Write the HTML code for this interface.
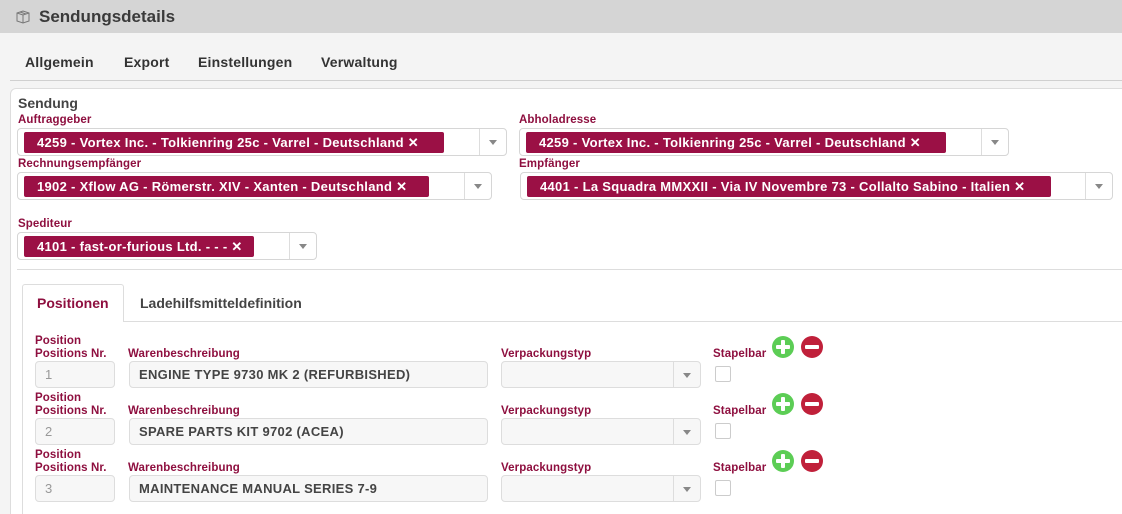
<!DOCTYPE html>
<html style="width:1122px;height:514px;overflow:hidden"><head><meta charset="utf-8"><style>
*{box-sizing:border-box;margin:0;padding:0}
body{width:1122px;height:514px;overflow:hidden;background:#f4f4f4;font-family:"Liberation Sans",sans-serif;position:relative;color:#333}
.a{position:absolute;white-space:nowrap}
.hdr{left:0;top:0;width:1122px;height:33px;background:#d5d5d5}
.ttl{left:39px;top:7px;font-size:17px;font-weight:bold;color:#3a3a3a}
.menu{top:54px;font-size:14px;font-weight:bold;color:#333;letter-spacing:.2px}
.card{left:10px;top:88px;width:1130px;height:440px;background:#fff;border:1px solid #ddd;border-radius:6px}
.lbl{font-size:11.5px;font-weight:bold;color:#8e0f3f;letter-spacing:.1px}
.box{height:28px;border:1px solid #d6d6d6;border-radius:4px;background:#fff}
.dd{position:absolute;top:0;right:0;width:27px;height:26px;border-left:1px solid #ddd}
.dd:after{content:"";position:absolute;left:9px;top:11px;border:4px solid transparent;border-top:5px solid #888}
.tag{position:absolute;left:6px;top:3px;height:21px;background:#9b1045;border-radius:2px;color:#fff;font-size:13px;font-weight:bold;line-height:21px;padding-left:13px;white-space:nowrap;overflow:hidden;letter-spacing:.3px}
.inp{height:27px;border:1px solid #ddd;border-radius:4px;background:#f7f7f7;font-size:13px;font-weight:bold;color:#444;line-height:25px;padding-left:9px;letter-spacing:.3px}
.chk{width:16px;height:16px;border:1px solid #ccc;border-radius:2px;background:#fff}
.plus,.minus{width:22px;height:22px;border-radius:50%}
.plus{background:#5ccd55}.minus{background:#c0203a}
.plus:before,.plus:after,.minus:before{content:"";position:absolute;background:#fff;border-radius:1px}
.plus:before,.minus:before{left:4px;top:9px;width:14px;height:4px}
.plus:after{left:9px;top:4px;width:4px;height:14px}
</style></head><body>
<div class="a hdr"></div>
<svg class="a" style="left:15px;top:9px" width="16" height="16" viewBox="0 0 16 16" fill="none" stroke="#777" stroke-width="1"><path d="M2 4l6-2 6 2v8l-6 2-6-2z M2 4l6 2 6-2 M8 6v8 M5 3l6 2"/></svg>
<div class="a ttl">Sendungsdetails</div>
<div class="a menu" style="left:25px">Allgemein</div>
<div class="a menu" style="left:124px">Export</div>
<div class="a menu" style="left:198px">Einstellungen</div>
<div class="a menu" style="left:321px">Verwaltung</div>
<div class="a" style="left:10px;top:80px;width:1112px;height:1px;background:#d0d0d0"></div>
<div class="a card"></div>
<div class="a" style="left:18px;top:95px;font-size:14px;font-weight:bold;color:#444">Sendung</div>

<div class="a lbl" style="left:18px;top:114px">Auftraggeber</div>
<div class="a box" style="left:17px;top:128px;width:490px"><div class="tag" style="width:420px">4259 - Vortex Inc. - Tolkienring 25c - Varrel - Deutschland ✕</div><div class="dd"></div></div>
<div class="a lbl" style="left:519px;top:114px">Abholadresse</div>
<div class="a box" style="left:519px;top:128px;width:490px"><div class="tag" style="width:420px">4259 - Vortex Inc. - Tolkienring 25c - Varrel - Deutschland ✕</div><div class="dd"></div></div>
<div class="a lbl" style="left:18px;top:158px">Rechnungsempfänger</div>
<div class="a box" style="left:17px;top:172px;width:475px"><div class="tag" style="width:405px">1902 - Xflow AG - Römerstr. XIV - Xanten - Deutschland ✕</div><div class="dd"></div></div>
<div class="a lbl" style="left:519px;top:158px">Empfänger</div>
<div class="a box" style="left:520px;top:172px;width:593px"><div class="tag" style="width:524px">4401 - La Squadra MMXXII - Via IV Novembre 73 - Collalto Sabino - Italien ✕</div><div class="dd"></div></div>
<div class="a lbl" style="left:18px;top:218px">Spediteur</div>
<div class="a box" style="left:17px;top:232px;width:300px"><div class="tag" style="width:230px">4101 - fast-or-furious Ltd. - - - ✕</div><div class="dd"></div></div>
<div class="a" style="left:17px;top:269px;width:1105px;height:1px;background:#ddd"></div>

<div class="a" style="left:22px;top:321px;width:1100px;height:1px;background:#ddd"></div>
<div class="a" style="left:22px;top:321px;width:1px;height:200px;background:#ddd"></div>
<div class="a" style="left:22px;top:284px;width:102px;height:38px;background:#fff;border:1px solid #ddd;border-bottom:none;border-radius:3px 3px 0 0"></div>
<div class="a" style="left:37px;top:295px;font-size:14px;font-weight:bold;color:#8e0f3f">Positionen</div>
<div class="a" style="left:140px;top:295px;font-size:14px;font-weight:bold;color:#444">Ladehilfsmitteldefinition</div>

<div id="rows"></div>
<script>
var d=[["1","ENGINE TYPE 9730 MK 2 (REFURBISHED)"],["2","SPARE PARTS KIT 9702 (ACEA)"],["3","MAINTENANCE MANUAL SERIES 7-9"]],h="";
d.forEach(function(r,i){var y=i*57;
h+='<div class="a lbl" style="left:35px;top:'+(335+y)+'px;line-height:13px">Position<br>Positions Nr.</div>'+
'<div class="a lbl" style="left:128px;top:'+(348+y)+'px">Warenbeschreibung</div>'+
'<div class="a lbl" style="left:501px;top:'+(348+y)+'px">Verpackungstyp</div>'+
'<div class="a lbl" style="left:713px;top:'+(348+y)+'px">Stapelbar</div>'+
'<div class="a inp" style="left:35px;top:'+(361+y)+'px;width:80px;color:#999;font-weight:normal">'+r[0]+'</div>'+
'<div class="a inp" style="left:129px;top:'+(361+y)+'px;width:359px">'+r[1]+'</div>'+
'<div class="a inp" style="left:501px;top:'+(361+y)+'px;width:200px"><div class="dd"></div></div>'+
'<div class="a chk" style="left:715px;top:'+(366+y)+'px"></div>'+
'<div class="a plus" style="left:772px;top:'+(336+y)+'px"></div>'+
'<div class="a minus" style="left:801px;top:'+(336+y)+'px"></div>';});
document.getElementById("rows").innerHTML=h;
</script>
</body></html>
